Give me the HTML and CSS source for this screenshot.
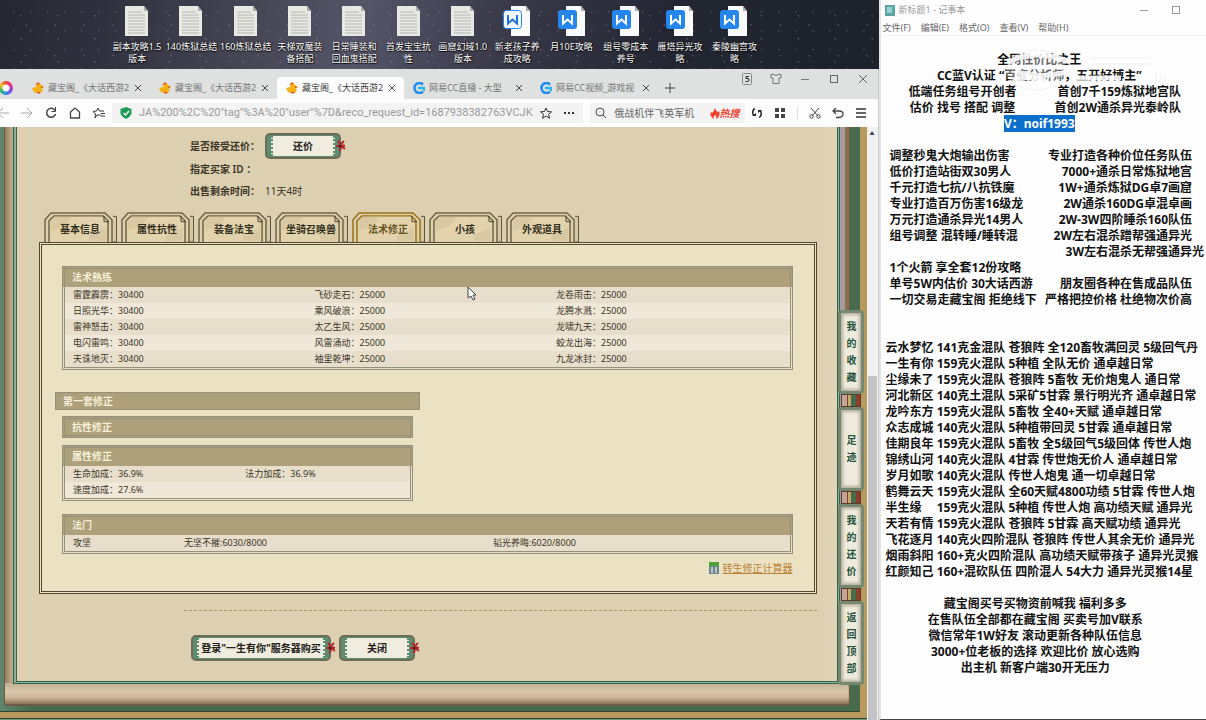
FILE: index.html
```html
<!DOCTYPE html>
<html lang="zh-CN">
<head>
<meta charset="utf-8">
<title>藏宝阁</title>
<link rel="stylesheet" href="styles.css">
</head>
<body>
<svg class="defs" aria-hidden="true">
  <symbol id="doc" viewBox="0 0 24 32"><path d="M0 1h19l4 5v25H0z" fill="#e9e9e4"/><path d="M19 1v5h4z" fill="#aaa"/><path d="M3 7h14M3 10h17M3 13h17M3 16h17M3 19h17M3 22h17M3 25h17M3 28h17" stroke="#b4b4b4"/></symbol>
  <symbol id="word" viewBox="0 0 30 32"><path d="M9 1h15l4 5v25H9z" fill="#fafafa"/><path d="M24 1v5h4z" fill="#aaa"/><rect x="1" y="5" width="19" height="19" rx="3" fill="#2586f0"/><path d="M6 10v8.500l4.500-4 4.500 4V10" fill="none" stroke="#fff" stroke-width="2"/></symbol>
  <symbol id="word-light" viewBox="0 0 30 32"><path d="M9 1h15l4 5v25H9z" fill="#fafafa"/><path d="M24 1v5h4z" fill="#aaa"/><rect x="1.500" y="5.500" width="18" height="18" rx="3" fill="#f4f8ff" stroke="#2586f0"/><path d="M6 10v8.500l4.500-4 4.500 4V10" fill="none" stroke="#2070dd" stroke-width="2"/></symbol>
  <symbol id="duck" viewBox="0 0 12 12"><path d="M0 6l4-1c0-3 4-5 5-2l3 2-2 1c2 4-1 5-4 5-3 0-5-1-6-5z" fill="#f3b318"/><path d="M3 3l3-3 2 2zM9 4l3 1-3 1zM4 10h5l-2 2z" fill="#e2541b"/></symbol>
  <symbol id="cc" viewBox="0 0 12 12"><path d="M10 2.500A5 5 0 1 0 10 9.500" fill="none" stroke="#1c8cf0" stroke-width="2.500"/><path d="M5 6h6v3" fill="none" stroke="#27b8e8" stroke-width="2.500"/></symbol>
  <symbol id="flower" viewBox="0 0 10 12"><path d="M0 6h3M4 4L2 1M5 4l3-3M5 6l4 3M5 6l-1 5M5 5l4 1" stroke="#b3262b" stroke-width="2"/><circle cx="4" cy="6" r="1.500" fill="#5d1517"/></symbol>
  <symbol id="tabshape" viewBox="0 0 74 31" preserveAspectRatio="none"><path d="M69 4.500h3.500V31h-4" fill="#d8c9a5" stroke="#5c523b"/><path d="M1 31V8l6-7h54l7 7v23" fill="#ddd0aa" stroke="currentColor" stroke-width="1.500"/><path d="M5 31V9l5-5h49l5 5v22" fill="#e2d3ad" stroke="currentColor" stroke-width="1.500"/><path d="M7 8l5-3h16l-8 10-13 4zM45 24l17-8v14H45z" fill="#d0bf99" opacity=".5"/><path d="M60 4v6h5" fill="none" stroke="#4d452f"/></symbol>
</svg>

<main class="screen">
<div class="left">
  <ul class="icons">
    <li><svg class="doc"><use href="#doc"/></svg><span>副本攻略1.5<br>版本</span></li>
    <li><svg class="doc"><use href="#doc"/></svg><span>140炼狱总结</span></li>
    <li><svg class="doc"><use href="#doc"/></svg><span>160炼狱总结</span></li>
    <li><svg class="doc"><use href="#doc"/></svg><span>天梯双魔装<br>备搭配</span></li>
    <li><svg class="doc"><use href="#doc"/></svg><span>日常睡装和<br>回血鬼搭配</span></li>
    <li><svg class="doc"><use href="#doc"/></svg><span>首发宝宝抗<br>性</span></li>
    <li><svg class="doc"><use href="#doc"/></svg><span>画窟幻域1.0<br>版本</span></li>
    <li><svg class="word"><use href="#word-light"/></svg><span>新老孩子养<br>成攻略</span></li>
    <li><svg class="word"><use href="#word"/></svg><span>月10E攻略</span></li>
    <li><svg class="word"><use href="#word"/></svg><span>组号零成本<br>养号</span></li>
    <li><svg class="word"><use href="#word"/></svg><span>雁塔异光攻<br>略</span></li>
    <li><svg class="word"><use href="#word"/></svg><span>秦陵幽宫攻<br>略</span></li>
  </ul>

  <section class="browser">
    <header class="tabbar">
      <span class="logo"></span>
      <div class="wtab"><svg class="fav"><use href="#duck"/></svg><span>藏宝阁_《大话西游2</span><button aria-label="关闭标签"><svg width="8" height="8"><path d="M1 1l6 6M7 1L1 7" stroke="#444"/></svg></button></div>
      <div class="wtab"><svg class="fav"><use href="#duck"/></svg><span>藏宝阁_《大话西游2</span><button aria-label="关闭标签"><svg width="8" height="8"><path d="M1 1l6 6M7 1L1 7" stroke="#444"/></svg></button></div>
      <div class="wtab on"><svg class="fav"><use href="#duck"/></svg><span>藏宝阁_《大话西游2</span><button aria-label="关闭标签"><svg width="8" height="8"><path d="M1 1l6 6M7 1L1 7" stroke="#444"/></svg></button></div>
      <div class="wtab"><svg class="fav"><use href="#cc"/></svg><span>网易CC直播 - 大型</span><button aria-label="关闭标签"><svg width="8" height="8"><path d="M1 1l6 6M7 1L1 7" stroke="#444"/></svg></button></div>
      <div class="wtab"><svg class="fav"><use href="#cc"/></svg><span>网易CC视频_游戏视</span><button aria-label="关闭标签"><svg width="8" height="8"><path d="M1 1l6 6M7 1L1 7" stroke="#444"/></svg></button></div>
      <button class="plus" aria-label="新标签"><svg width="10" height="10"><path d="M5 0v10M0 5h10" stroke="#444"/></svg></button>
      <div class="ctl">
        <button aria-label="通知"><svg width="10" height="12"><rect x=".5" y=".5" width="9" height="11" rx="1" fill="none" stroke="#888"/><path d="M7 3.500H4v2h2q1 0 1 1.500T5.500 8.500H3.500" fill="none" stroke="#222"/></svg></button>
        <button aria-label="皮肤"><svg width="12" height="12"><path d="M1 1.500h3q2 2 4 0h3v3.500H9v5.500H3V5H1z" fill="none" stroke="#777"/></svg></button>
        <button aria-label="最小化"><svg width="10" height="12"><path d="M1 6.500h8" stroke="#777"/></svg></button>
        <button aria-label="最大化"><svg width="10" height="12"><rect x="1.500" y="2.500" width="7" height="7" fill="none" stroke="#666"/></svg></button>
        <button aria-label="关闭"><svg width="10" height="12"><path d="M1 2l8 8M9 2l-8 8" stroke="#666"/></svg></button>
      </div>
    </header>

    <div class="toolbar">
      <div class="nav">
        <button aria-label="后退"><svg width="12" height="12"><path d="M12 6H1M6 1L1 6l5 5" fill="none" stroke="#aaa"/></svg></button>
        <button aria-label="前进"><svg width="12" height="12"><path d="M0 6h11M6 1l5 5-5 5" fill="none" stroke="#aaa"/></svg></button>
        <button aria-label="刷新"><svg width="12" height="12"><path d="M10 3.500A4.500 4.500 0 1 0 10.500 7" fill="none" stroke="#444" stroke-width="1.500"/><path d="M10.500 0v4.500H6.500" fill="none" stroke="#444"/></svg></button>
        <button aria-label="主页"><svg width="12" height="12"><path d="M1.500 5L6 1l4.500 4v6H1.500z" fill="none" stroke="#444" stroke-width="1.300"/></svg></button>
        <button aria-label="收藏夹"><svg width="13" height="12"><path d="M8 8H4l-2 3 .5-4L0 4.500 3.500 4 5 1l1.500 3H11M8 6.500h4M8 9h4" fill="none" stroke="#333"/></svg></button>
      </div>
      <div class="addr">
        <svg width="12" height="12"><path d="M6 0l5.500 2v5Q10 10 6 12 2 10 .5 7V2z" fill="#1c9c52"/><path d="M3.500 6l2 2 3.500-4" fill="none" stroke="#fff" stroke-width="1.500"/></svg>
        <input aria-label="网址" value="JA%200%2C%20&quot;tag&quot;%3A%20&quot;user&quot;%7D&amp;reco_request_id=1687938382763VCJKN">
        <svg width="12" height="12"><path d="M6 1l1.500 3.500 4 .3-3 2.500 1 4L6 9l-3.500 2.300 1-4-3-2.500 4-.3z" fill="none" stroke="#333"/></svg>
        <svg width="12" height="12" class="dots"><path d="M1 6h2M5 6h2M9 6h2" stroke="#333" stroke-width="2"/></svg>
      </div>
      <div class="search">
        <svg width="12" height="12"><circle cx="5" cy="5" r="4" fill="none" stroke="#444"/><path d="M8 8l3 3" stroke="#444"/></svg>
        <input aria-label="搜索" value="俄战机伴飞英军机">
        <svg width="10" height="11"><path d="M5 0q1 3 3 4l1-1q2 5-3 8 1-3-1-4-2 2-1 4Q-1 8 1 4l1 1Q4 3 5 0z" fill="#ee4432"/></svg><b>热搜</b>
      </div>
      <div class="tools">
        <button aria-label="同步"><svg width="12" height="12"><path d="M4 1.500Q1 3 2 7l1 2M8 10.500Q11 9 10 5L9 3" fill="none" stroke="#222" stroke-width="1.500"/><path d="M1 9h4V6zM7 3h4L7 6z" fill="#222"/></svg></button>
        <button aria-label="应用"><svg width="12" height="12"><path d="M1 1h4v4H1zM7 1h4v4H7zM1 7h4v4H1zM7 7h4v4H7z" fill="#444"/></svg></button>
        <i></i>
        <button aria-label="截图"><svg width="12" height="12"><path d="M2 1l7 8M10 1L3 9" stroke="#444"/><circle cx="2.500" cy="9.500" r="1.700" fill="none" stroke="#444"/><circle cx="9.500" cy="9.500" r="1.700" fill="none" stroke="#444"/></svg></button>
        <button aria-label="撤销"><svg width="12" height="12"><path d="M4 1L1 4l3 3M1 4h6q4 0 4 3t-4 3.500H4" fill="none" stroke="#444" stroke-width="1.300"/></svg></button>
        <button aria-label="菜单"><svg width="12" height="12"><path d="M1 2h10M1 6h10M1 10h10" stroke="#333" stroke-width="1.300"/></svg></button>
      </div>
    </div>

    <div class="view">
      <div class="site">
        <div class="green"><div class="wood"><div class="paper">
          <dl class="info">
            <div class="tall"><dt>是否接受还价：</dt><dd><button class="plate"><span>还价</span><svg><use href="#flower"/></svg></button></dd></div>
            <div><dt>指定买家 ID ：</dt><dd></dd></div>
            <div><dt>出售剩余时间：</dt><dd>11天4时</dd></div>
          </dl>
          <nav class="tabs">
            <button><svg><use href="#tabshape"/></svg><span>基本信息</span></button>
            <button><svg><use href="#tabshape"/></svg><span>属性抗性</span></button>
            <button><svg><use href="#tabshape"/></svg><span>装备法宝</span></button>
            <button><svg><use href="#tabshape"/></svg><span>坐骑召唤兽</span></button>
            <button class="on"><svg><use href="#tabshape"/></svg><span>法术修正</span></button>
            <button><svg><use href="#tabshape"/></svg><span>小孩</span></button>
            <button><svg><use href="#tabshape"/></svg><span>外观道具</span></button>
          </nav>
          <section class="panel">
            <table class="box first">
              <caption>法术熟练</caption>
              <tr><td>雷霆霹雳：30400</td><td>飞砂走石：25000</td><td>龙卷雨击：25000</td></tr>
              <tr><td>日照光华：30400</td><td>乘风破浪：25000</td><td>龙腾水溅：25000</td></tr>
              <tr><td>雷神怒击：30400</td><td>太乙生风：25000</td><td>龙啸九天：25000</td></tr>
              <tr><td>电闪雷鸣：30400</td><td>风雷涌动：25000</td><td>蛟龙出海：25000</td></tr>
              <tr><td>天诛地灭：30400</td><td>袖里乾坤：25000</td><td>九龙冰封：25000</td></tr>
            </table>
            <h2 class="bar">第一套修正</h2>
            <h3 class="box half empty">抗性修正</h3>
            <table class="box half">
              <caption>属性修正</caption>
              <tr><td>生命加成：36.9%</td><td>法力加成：36.9%</td></tr>
              <tr><td>速度加成：27.6%</td><td></td></tr>
            </table>
            <table class="box famen">
              <caption>法门</caption>
              <tr><td>攻坚</td><td>无坚不摧:6030/8000</td><td>韬光养晦:6020/8000</td></tr>
            </table>
            <p class="calc"><svg width="10" height="12"><rect width="10" height="12" fill="#6d8793"/><path d="M0 0h10v4H0z" fill="#4da238"/><path d="M2 6h2M6 6h2M2 8h2M6 8h2M2 10h2M6 10h2" stroke="#fff"/></svg><a href="#">转生修正计算器</a></p>
          </section>
          <hr>
          <div class="acts">
            <button class="plate wide"><span>登录"一生有你"服务器购买</span><svg><use href="#flower"/></svg></button>
            <button class="plate"><span>关闭</span><svg><use href="#flower"/></svg></button>
          </div>
        </div></div></div>
        <div class="foot"></div>
        <nav class="side">
          <a href="#">我的收藏</a><i></i><a href="#">足迹</a><i></i><a href="#">我的还价</a><i></i><a href="#">返回顶部</a>
        </nav>
        <svg class="cursor" width="10" height="15"><path d="M1 1v11l3-2 2 4 2-1-2-4h3z" fill="#fff" stroke="#444"/></svg>
      </div>
      <div class="scroll"><span>▲</span><i></i></div>
    </div>
  </section>
</div>

<section class="notepad">
  <header class="title"><svg width="12" height="12"><rect x="1" y="1" width="10" height="11" fill="#5ba6a4"/><path d="M3 4h5M3 6h5M3 8h5" stroke="#dff"/></svg><span>新标题1 - 记事本</span>
    <div class="nctl"><button aria-label="最小化"><svg width="10" height="10"><path d="M1 5.500h8" stroke="#999"/></svg></button><button aria-label="最大化"><svg width="10" height="10"><rect x="1.500" y="1.500" width="7" height="7" fill="none" stroke="#999"/></svg></button></div>
  </header>
  <nav class="menu"><button>文件(F)</button><button>编辑(E)</button><button>格式(O)</button><button>查看(V)</button><button>帮助(H)</button></nav>
  <article class="note">
    <div class="mid">
      <p>全网性价比之王</p>
      <p>CC蓝V认证 “百变分析师，五开好博主”</p>
      <div class="pair inner"><div><p>低端任务组号开创者</p><p>估价 找号 搭配 调整</p></div><div class="r"><p>首创7千159炼狱地宫队</p><p>首创2W通杀异光泰岭队</p></div></div>
      <p><mark>V：noif1993</mark></p>
      <svg class="haze" viewBox="0 0 180 50"><path d="M18 18q24-14 62 0M24 27q30 10 60-2M22 36q16-6 34 2M86 34h44" stroke="#fff" stroke-width="5" fill="none" opacity=".85"/><ellipse cx="45" cy="26" rx="30" ry="20" fill="#fff" opacity=".35" stroke="#ddd"/><path d="M100 14h60M100 20h60M165 28v12M170 30v8M174 30v8" stroke="#eee" fill="none"/></svg>
    </div>
    <div class="pair gap">
      <div><p>调整秒鬼大炮输出伤害</p><p>低价打造站街双30男人</p><p>千元打造七抗/八抗铁魔</p><p>专业打造百万伤害16级龙</p><p>万元打造通杀异光14男人</p><p>组号调整 混转睡/睡转混</p></div>
      <div class="r"><p>专业打造各种价位任务队伍</p><p>7000+通杀日常炼狱地宫</p><p>1W+通杀炼狱DG卓7画窟</p><p>2W通杀160DG卓混卓画</p><p>2W-3W四阶睡杀160队伍</p><p>2W左右混杀蹭帮强通异光</p><p class="out">3W左右混杀无帮强通异光</p></div>
    </div>
    <div class="pair end">
      <div><p>1个火箭 享全套12份攻略</p><p>单号5W内估价 30大话西游</p><p>一切交易走藏宝阁 拒绝线下</p></div>
      <div class="r"><p>朋友圈各种在售成品队伍</p><p>严格把控价格 杜绝物次价高</p></div>
    </div>
    <div class="list">
      <p>云水梦忆 141克金混队 苍狼阵 全120畜牧满回灵 5级回气丹</p>
      <p>一生有你 159克火混队 5种植 全队无价 通卓越日常</p>
      <p>尘缘未了 159克火混队 苍狼阵 5畜牧 无价炮鬼人 通日常</p>
      <p>河北新区 140克土混队 5采矿5甘霖 景行明光齐 通卓越日常</p>
      <p>龙吟东方 159克火混队 5畜牧 全40+天赋 通卓越日常</p>
      <p>众志成城 140克火混队 5种植带回灵 5甘霖 通卓越日常</p>
      <p>佳期良年 159克火混队 5畜牧 全5级回气5级回体 传世人炮</p>
      <p>锦绣山河 140克火混队 4甘霖 传世炮无价人 通卓越日常</p>
      <p>岁月如歌 140克火混队 传世人炮鬼 通一切卓越日常</p>
      <p>鹤舞云天 159克火混队 全60天赋4800功绩 5甘霖 传世人炮</p>
      <p>半生缘　 159克火混队 5种植 传世人炮 高功绩天赋 通异光</p>
      <p>天若有情 159克火混队 苍狼阵 5甘霖 高天赋功绩 通异光</p>
      <p>飞花逐月 140克火四阶混队 苍狼阵 传世人其余无价 通异光</p>
      <p>烟雨斜阳 160+克火四阶混队 高功绩天赋带孩子 通异光灵猴</p>
      <p>红颜知己 160+混砍队伍 四阶混人 54大力 通异光灵猴14星</p>
    </div>
    <div class="mid last">
      <p>藏宝阁买号买物资前喊我 福利多多</p>
      <p>在售队伍全部都在藏宝阁 买卖号加V联系</p>
      <p>微信常年1W好友 滚动更新各种队伍信息</p>
      <p>3000+位老板的选择 欢迎比价 放心选购</p>
      <p>出主机 新客户端30开无压力</p>
    </div>
  </article>
</section>
</main>
</body>
</html>
```

FILE: styles.css
```css
* { box-sizing: border-box; margin: 0; padding: 0; }
html, body { height: 100%; overflow: hidden; }
body { font-family: "Noto Sans", "Noto Sans CJK SC", sans-serif; font-size: 10px; line-height: 12px; color: #3b3526; }
button, input { font: inherit; color: inherit; background: none; border: 0; }
ul { list-style: none; }
svg { display: block; flex: none; }
.defs { position: absolute; width: 0; height: 0; }

.screen { display: flex; height: 100%; overflow: hidden; background: #20242e; }
.left { flex: 880 1 0; min-width: 0; display: flex; flex-direction: column; background: #20242e; }

/* desktop */
.icons {
  flex: none; height: 69px; display: grid; grid-template-columns: repeat(12, 1fr);
  padding: 5px 117px 0 110px; color: #fff; font-size: 9px; text-align: center;
  background:
    radial-gradient(circle, #9a9aae55 0 1px, transparent 1px) 3px 4px / 37px 23px,
    radial-gradient(circle, #8a8a9e55 0 1px, transparent 1px) 12px 9px / 29px 31px,
    radial-gradient(circle, #77778a55 0 1px, transparent 1px) 5px 2px / 17px 19px,
    linear-gradient(100deg, #242732 0, #30313e 12%, #474756 30%, #55556a 41%, #3b3b4b 56%, #242733 75%, #1b222b 100%);
}
.icons li { display: flex; flex-direction: column; align-items: center; white-space: nowrap; text-shadow: 0 1px 1px #000, 1px 0 1px #000; }
.icons span { padding-top: 4px; }
.doc { width: 24px; height: 32px; }
.word { width: 30px; height: 32px; }

/* browser */
.browser { flex: 1; min-height: 0; display: flex; flex-direction: column; border-right: 1px solid #c9c9c9; }
.tabbar { flex: none; display: flex; height: 30px; padding-top: 8px; background: #dfe0e0; }
.logo { flex: none; width: 14px; height: 14px; margin: 4px 10px 0 -1px; border-radius: 50%; background: radial-gradient(circle, #fff 0 3px, transparent 4px), conic-gradient(#f0433a, #e9359b, #8a4be8, #2c8cf0, #30b860, #f2c52e, #f0433a); }
.wtab { flex: 0 1 127px; min-width: 0; display: flex; align-items: center; padding: 0 5px 0 9px; color: #777; border-radius: 4px 4px 0 0; font-size: 9px; }
.wtab span { flex: 1; min-width: 0; padding-left: 4px; white-space: nowrap; }
.wtab button { flex: none; width: 14px; display: grid; place-items: center; }
.wtab.on { background: #fdfdfd; color: #444; }
.fav { width: 12px; height: 12px; }
.plus { width: 24px; display: grid; place-items: center; }
.ctl { margin-left: auto; display: flex; align-self: flex-start; margin-top: -4px; }
.ctl button { width: 29px; height: 12px; display: grid; place-items: center; }

.toolbar { flex: none; display: flex; align-items: center; height: 28px; background: #fdfdfd; }
.nav { flex: none; display: flex; margin-left: -3px; width: 115px; gap: 12px; }
.addr { flex: 473 1 0; min-width: 0; display: flex; align-items: center; height: 20px; padding: 0 8px; background: #f3f3f4; gap: 7px; }
.addr input { flex: 1; min-width: 0; color: #999; font: 11px/16px Roboto, sans-serif; }
.dots { margin-left: 4px; }
.search { flex: 150 1 0; min-width: 0; display: flex; align-items: center; height: 20px; margin-left: 7px; padding: 0 5px; background: #f3f3f4; }
.search input { flex: 1; min-width: 0; margin-left: 7px; color: #666; }
.search b { color: #ee4432; font-style: italic; }
.tools { flex: none; display: flex; align-items: center; margin-left: 6px; gap: 11px; padding-right: 11px; }
.tools i { width: 1px; height: 14px; background: #ddd; }

.view { flex: 1; min-height: 0; display: flex; overflow: hidden; }
.site { position: relative; flex: 1; min-width: 0; background: #b89a5e; }
.scroll { flex: none; width: 11px; display: flex; flex-direction: column; background: #f1f1f2; text-align: center; font-size: 5px; color: #444; }
.scroll span { flex: 0 0 249px; }
.scroll i { flex: 1; margin: 0 1px; background: #c3c3c6; }

/* game frame */
.green { margin-right: 7px; padding: 0 10px 5px 4px; background: linear-gradient(90deg, #5f836c 0 4px, #486b4e 30px); border-bottom: 1px solid #30452f; }
.wood { padding: 0 9px 20px 8px; border: solid #6e5c42; border-width: 0 1px 2px 1px; border-radius: 0 0 4px 4px;
  background:
    linear-gradient(#c3b092, #d9c8ad 40%, #cdb69a 70%, #8c7258) bottom / 100% 21px no-repeat,
    linear-gradient(90deg, #8f7b5e, #bfa88a 6px, #b7a184 8px, transparent 8px),
    linear-gradient(270deg, #8a7049 0 4px, #a89ba0 4px 9px); }
.paper { display: flow-root; padding: 4px 20px 20px 22px; border: double #2f664f; border-width: 0 3px 3px 4px; background: linear-gradient(90deg, #e7cdb2 0, #ddd0b1 12px, #ddd0b1 98%, #e3d4b8) padding-box, #8fae97; }
.foot { height: 12px; background: linear-gradient(#b89a5e 0 6px, #33452f 6px 7px, #78997f 7px 10px, #151c18 10px); }

.info { padding-left: 151px; }
.info div { display: flex; align-items: center; height: 16px; margin-bottom: 6px; }
.info .tall { height: 30px; margin-bottom: 0; }
.info dt { width: 75px; font-weight: 600; white-space: nowrap; }
.plate { position: relative; min-width: 76px; height: 26px; padding: 1px 4px; border: 2px solid #6d6c56; border-radius: 5px; background: #5e8c70; font-weight: 700; color: #222018; }
.plate span { display: grid; place-items: center; height: 100%; border: dotted #5e8c70; border-width: 0 2px; background: #f1ece0; white-space: nowrap; }
.plate svg { position: absolute; right: -7px; top: 5px; width: 10px; height: 12px; }

.tabs { display: flex; gap: 3px; margin-top: 13px; padding-left: 5px; }
.tabs button { position: relative; flex: 0 1 74px; height: 30px; padding: 3px 2px 0 0; font-weight: 600; color: #343020; }
.tabs svg { position: absolute; inset: 0; width: 100%; height: 30px; color: #70644a; }
.tabs span { position: relative; }
.tabs .on { color: #67531d; }
.tabs .on svg { color: #9b701b; }

.panel { border: 3px double #51482f; padding: 21px 21px 17px 20px; background: #ebe2c4; }
.box { width: 100%; margin-bottom: 7px; border: 3px double #94927b; border-collapse: separate; border-spacing: 0; table-layout: fixed; font-size: 9px; background: #e7dfcc; }
table.box caption { display: table-caption; height: 21px; line-height: 17px; border: 3px double #94927b; border-bottom: 0; }
table.box { border-top: 0; }
.box caption, .empty, .bar { padding-left: 7px; text-align: left; font-size: 10px; font-weight: 600; color: #f6efd8; background: #aea07b; }
.box td { height: 16px; padding-left: 8px; line-height: 12px; white-space: nowrap; }
.box tr:nth-child(even) { background: #efe8d8; }
.first { margin-bottom: 22px; }
.bar { width: 50%; height: 18px; margin: 0 0 6px -7px; line-height: 16px; border: 1px solid #94927b; }
.half { width: 48%; }
.empty { height: 22px; line-height: 16px; }
.famen { margin: 13px 0 8px; }
.famen td:first-child { width: 111px; }
.famen td:nth-child(2) { width: 309px; }
.calc { display: flex; justify-content: flex-end; align-items: center; gap: 4px; }
.calc a { color: #bd8437; }
hr { margin: 16px 0 0 145px; border: 0; border-top: 1px dashed #ad9463; }
.acts { display: flex; gap: 8px; margin-top: 24px; padding-left: 152px; }
.wide { min-width: 140px; }

.side { position: absolute; right: 3px; top: 183px; width: 26px; }
.side a { display: grid; place-items: center; height: 84px; padding: 0 6px; border: 3px solid #748872; border-radius: 4px; background: #eeeade; box-shadow: inset 0 0 3px 2px #b8b09b; color: #245238; font-weight: 600; line-height: 17px; text-align: center; text-decoration: none; word-break: break-all; }
.side i { display: block; height: 13px; margin: 0 3px; border: 1px solid #5d3b2b; background: linear-gradient(90deg, #c0a694 0 25%, #8d3d2c 25% 35%, #c4a96b 35% 50%, #456c4c 50% 80%, #8d3d2c 80%); }
.cursor { position: absolute; left: 467px; top: 159px; }

/* notepad */
.notepad { flex: 326 1 0; min-width: 0; display: flex; flex-direction: column; border: solid #e4e4e4; border-width: 0 0 0 2px; border-bottom: 1px solid #444; background: #fefefe; }
.title { display: flex; align-items: center; height: 20px; padding: 0 25px 0 3px; font-size: 9px; color: #999; gap: 3px; }
.nctl { margin-left: auto; display: flex; gap: 22px; }
.menu { display: flex; height: 16px; padding-left: 2px; gap: 10px; font-size: 9px; color: #666; border-bottom: 1px solid #f1f1f1; }
.note { flex: 1; padding-top: 16px; color: #111; font-size: 12px; font-weight: 700; line-height: 16px; }
.note p { white-space: nowrap; height: 16px; }
.mid { position: relative; padding-right: 8px; text-align: center; }
.pair { display: flex; justify-content: space-between; padding: 0 14px 0 9px; }
.pair .r { text-align: right; }
.pair .out { margin-right: -12px; }
.inner { padding: 0 17px 0 28px; }
.gap { padding-top: 16px; }
.end { align-items: flex-end; }
.list { padding: 32px 0 16px 5px; }
.last { padding-right: 16px; }
.haze { position: absolute; left: 110px; top: -8px; width: 180px; height: 50px; }
mark { color: #fff; background: #0b70cc; }
```
